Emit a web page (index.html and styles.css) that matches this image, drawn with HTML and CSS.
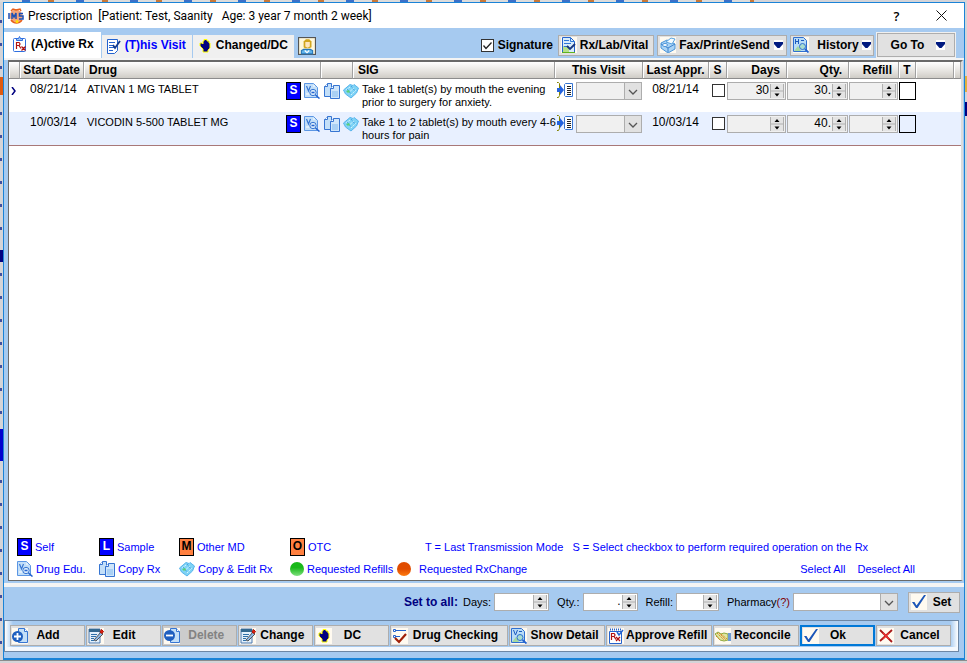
FILE: index.html
```
<!DOCTYPE html>
<html lang="en">
<head>
    <meta charset="UTF-8">
    <meta name="viewport" content="width=device-width, initial-scale=1.0">
    <title>Prescription</title>
    <link rel="stylesheet" href="styles.css">
</head>
<body>
    <!-- icons -->
    <svg class="sprite" aria-hidden="true">
        <symbol id="i-logo" viewBox="0 0 16 16">
            <circle cx="8" cy="8" r="6.500" fill="#f4a57a"/>
            <path d="M3 3l2-2 3 1 4-1 1 2" fill="none" stroke="#e8601c" stroke-width="1.500"/>
            <path d="M3 12c3 4 8 4 11 0" fill="none" stroke="#e8601c" stroke-width="1.500"/>
            <path d="M1 5v6M4 11V5l2 4 2-4v6M15 5.500h-3.500v2.500H15V11h-4" fill="none" stroke="#1c4fb5" stroke-width="1.500"/>
            <circle cx="9" cy="13.500" r="1.500" fill="#ffe000"/>
        </symbol>
        <symbol id="i-rx" viewBox="0 0 16 16">
            <rect x="1.500" y="2.500" width="12" height="13" rx="1" fill="#fff" stroke="#2f6fe0"/>
            <path d="M4.500 4.500v-2h2l1-2 1 2h2v2z" fill="#9cc4f5" stroke="#2f6fe0"/>
            <path d="M4.500 13V6.500h2.500q2 1.500 0 3H4.500M7 9.500l2 3M9.500 10.500l4 4M13.500 10.500l-4 4" fill="none" stroke="#b01010" stroke-width="1.200"/>
        </symbol>
        <symbol id="i-note" viewBox="0 0 16 16">
            <path d="M1.500 1.500h10v11l-3 3h-7z" fill="#fff" stroke="#2463cf"/>
            <path d="M3 4.500h6M3 7.500h4M3 9.500h5M3 12.500h4" stroke="#2463cf"/>
            <path d="M7 7l2 3 5-7" fill="none" stroke="#123a8c" stroke-width="1.800"/>
        </symbol>
        <symbol id="i-hand" viewBox="0 0 16 16">
            <path d="M6 14v-3L3 8V5h2l1 1V3h1V1.500h3V3h2v2h1v5l-2 2v2z" fill="#000080" stroke="#ffff00"/>
        </symbol>
        <symbol id="i-person" viewBox="0 0 16 16">
            <rect x=".5" y=".5" width="15" height="15" fill="#fff8dc" stroke="#555"/>
            <path d="M3 15v-3l2-1h6l2 1v3z" fill="#5fb3ea" stroke="#2876b8"/>
            <path d="M5 9V4l2-2h3l2 2v5l-2 1H6z" fill="#d2a61e"/>
            <path d="M6.500 4.500h4v4l-2 1-2-1z" fill="#ffe6bd"/>
            <path d="M6 12l2 2 2-2" fill="none" stroke="#fff"/>
        </symbol>
        <symbol id="i-lab" viewBox="0 0 16 16">
            <path d="M1.500.5h8l4 4v11h-12z" fill="#d8ecfa" stroke="#2463cf"/>
            <path d="M2 9h6v6H2z" fill="#b5e08a"/>
            <path d="M9.500.5v4h4M3 3.500h5M3 6.500h7M3 9.500h3" fill="none" stroke="#2f78d8"/>
            <path d="M1 15.500h13" stroke="#5fb31f"/>
            <path d="M6 9l3 3 5-5" fill="none" stroke="#16357e" stroke-width="1.800"/>
        </symbol>
        <symbol id="i-print" viewBox="0 0 16 16">
            <path d="M1 6l6-3 8 4v5l-7 4-7-5z" fill="#a9d3f5" stroke="#4a94d8"/>
            <path d="M6 5l5-4 4 1-3 5z" fill="#f3fbff" stroke="#5ba4e0"/>
            <path d="M1 7l7 4 7-4M8 11v4" fill="none" stroke="#3b82cd"/>
            <ellipse cx="5" cy="8" rx="2.500" ry="1.500" fill="#fff" stroke="#4a94d8"/>
        </symbol>
        <symbol id="i-history" viewBox="0 0 16 16">
            <path d="M.5.5h10l3 3v11H.5z" fill="#b9dcf7" stroke="#2f6fd0"/>
            <path d="M2.500 2v5M5.500 2v5M2.500 4.500h3M8 3.500h3" fill="none" stroke="#1c5bbf"/>
            <path d="M1 14l4-5 3 5z" fill="#a5d8a0"/>
            <circle cx="9.500" cy="9.500" r="3" fill="#a9ddcf" stroke="#2f6fd0"/>
            <path d="M12 12l3.500 3.500" stroke="#2463cf" stroke-width="1.800"/>
        </symbol>
        <symbol id="i-detail" viewBox="0 0 16 16">
            <path d="M.5.5h10l3 3v11H.5z" fill="#b9dcf7" stroke="#2f6fd0"/>
            <path d="M2.500 2l2 5 2-5M8 3.500h3" fill="none" stroke="#1c5bbf"/>
            <path d="M1 14l4-5 3 5z" fill="#a5d8a0"/>
            <circle cx="9" cy="9.500" r="3" fill="#a9ddcf" stroke="#2f6fd0"/>
            <path d="M11.500 12l4 3.500" stroke="#2463cf" stroke-width="1.800"/>
        </symbol>
        <symbol id="i-edu" viewBox="0 0 16 16">
            <path d="M.5.5h9l4 4v10H.5z" fill="#c3dff8" stroke="#5b96e4"/>
            <path d="M2.500 3l2 5 2-5" fill="none" stroke="#3675d2" stroke-width="1.200"/>
            <path d="M9 3h2M2 11h3" stroke="#fff"/>
            <circle cx="9" cy="9.500" r="3.200" fill="#d8ebfb" stroke="#3675d2"/>
            <path d="M7.500 9.500h3M11.500 12l4 3.500" stroke="#2463cf" stroke-width="1.500"/>
        </symbol>
        <symbol id="i-copy" viewBox="0 0 16 16">
            <path d="M.5 3.500l3-3h4v13h-7z" fill="#c3dff8" stroke="#3675d2"/>
            <path d="M6.500 5.500l3-3h6v13h-9z" fill="#d0e6fa" stroke="#3675d2"/>
            <path d="M3.500.5v3h-3M9.500 2.500v3h-3" fill="#fff" stroke="#3675d2"/>
            <path d="M8 8h6v6H8z" fill="#a9d0f4"/>
        </symbol>
        <symbol id="i-copyedit" viewBox="0 0 16 16">
            <path d="M.5 7L7 1.500l3 1 1-1L15.500 5l-2 5L8 15 2.500 11z" fill="#7fd3f5" stroke="#58b4ec"/>
            <path d="M3 7l4-3M5 10l6-5M8 12l5-5" stroke="#d7f6ff" stroke-dasharray="2 1"/>
            <path d="M4 6l4 5M8 3l4 5" stroke="#2f8fdc" stroke-dasharray="1 1"/>
            <path d="M3 8l3-1 1 2-2 1z" fill="#58d07a"/>
        </symbol>
        <symbol id="i-send" viewBox="0 0 16 16">
            <path d="M0 .5h1.500l1 1v12l-1 2H0" fill="none" stroke="#848400"/>
            <path d="M0 6h3V3l4 5-4 5v-3H0z" fill="#2463df"/>
            <path d="M8.500 1.500h7v13h-7l-1-1v-11z" fill="#fff" stroke="#3675d2"/>
            <path d="M10 4.500h4M10 6.500h4M10 8.500h4M10 10.500h4M10 12.500h4" stroke="#222"/>
        </symbol>
        <symbol id="i-add" viewBox="0 0 16 16">
            <path d="M6.500.5h6l3 3v11h-9z" fill="#c3dff8" stroke="#3675d2"/>
            <path d="M12.500.5v3h3" fill="#fff" stroke="#3675d2"/>
            <circle cx="5.500" cy="8.500" r="5.500" fill="#1f5fc0"/>
            <path d="M2 8.500h7M5.500 5v7" stroke="#fff" stroke-width="1.800"/>
        </symbol>
        <symbol id="i-delete" viewBox="0 0 16 16">
            <path d="M6.500.5h6l3 3v11h-9z" fill="#c3dff8" stroke="#3675d2"/>
            <path d="M12.500.5v3h3" fill="#fff" stroke="#3675d2"/>
            <circle cx="5.500" cy="7.500" r="5.500" fill="#1f5fc0"/>
            <path d="M2 7.500h7" stroke="#fff" stroke-width="1.800"/>
        </symbol>
        <symbol id="i-edit" viewBox="0 0 16 16">
            <path d="M1 1h11v14H1z" fill="#e3f0fb" stroke="#4a78b0"/>
            <path d="M1 1h11v3H1z" fill="#33688f"/>
            <path d="M3 6.500h6M3 8.500h5M3 10.500h3M3 12.500h3" stroke="#2f6fa8"/>
            <path d="M6 12l7-8 2 2-7 7z" fill="#8db9e8" stroke="#555"/>
            <path d="M12 4l1.500-2.500 2 2L14 5.500z" fill="#e02010" stroke="#b01000"/>
        </symbol>
        <symbol id="i-checklist" viewBox="0 0 16 16">
            <path d="M1.500 1.500h2v2h-2zM1.500 7.500h2v2h-2z" fill="#fff" stroke="#2463cf"/>
            <path d="M4 2.500h10M4 8.500h4" stroke="#2463cf"/>
            <path d="M3 10l4 4 7-8" fill="none" stroke="#a02008" stroke-width="2.200"/>
        </symbol>
        <symbol id="i-approve" viewBox="0 0 16 16">
            <path d="M1.500 3.500h12v12h-12z" fill="#fff" stroke="#2463cf"/>
            <path d="M2 1.500h12" stroke="#2463cf" stroke-width="2" stroke-dasharray="1 1"/>
            <path d="M3.500 12V5.500h2.500q2 1.500 0 3H3.500M6 8.500l2 3M8 9l4 4M12 9l-4 4" fill="none" stroke="#b01010" stroke-width="1.200"/>
            <path d="M9 4l2 3 4-5" fill="none" stroke="#2463cf" stroke-width="1.500"/>
        </symbol>
        <symbol id="i-shake" viewBox="0 0 16 16">
            <path d="M0 6l3-2 3 2 3-1 4 1v6l-4 1-4-1z" fill="#dfe6a0" stroke="#8fa83c"/>
            <path d="M2 5l7 7M4 5l7 7M1 8l4 4M6 6l6 5" stroke="#d98a28" stroke-dasharray="2 1"/>
            <path d="M13 5h3v8h-3z" fill="#6f9bd0"/>
        </symbol>
        <symbol id="i-check" viewBox="0 0 16 16">
            <path d="M1 8h2.500l2 3.500L13 1h2L6.500 14H5z" fill="#1c56b8"/>
        </symbol>
        <symbol id="i-cross" viewBox="0 0 16 16">
            <path d="M2 2l12 12M14 2L2 13" stroke="#a81818" stroke-width="1.800"/>
            <path d="M5 5l6 6M11 5l-6 6" stroke="#f03030" stroke-width="1.200"/>
        </symbol>
        <symbol id="i-down" viewBox="0 0 11 10">
            <rect x="1" width="9" height="10" fill="#fff"/>
            <path d="M1 2h9v2L6.500 8h-2L1 4z" fill="#001a80"/>
        </symbol>
        <symbol id="i-spin" viewBox="0 0 14 14">
            <path d="M0 0h14v14H0z" fill="#e4e4e4"/>
            <path d="M.5 0v14M13.500 0v14M0 7h14" stroke="#b0b0b0"/>
            <path d="M4.500 5L7 2l2.500 3zM4.500 9.500h5L7 12.500z" fill="#000"/>
        </symbol>
    </svg>

    <div class="window">
        <header class="titlebar">
            <svg class="icon"><use href="#i-logo"/></svg>
            <h1>Prescription&nbsp; [Patient: Test, Saanity&nbsp;&nbsp; Age: 3 year 7 month 2 week]</h1>
            <button class="help" aria-label="Help">?</button>
            <button class="close" aria-label="Close"><svg viewBox="0 0 11 11"><path d="M.5.5l10 10M10.500.5l-10 10" stroke="#111"/></svg></button>
        </header>

        <div class="toolbar">
            <nav class="tabs">
                <button class="tab active"><svg class="icon"><use href="#i-rx"/></svg>(A)ctive Rx</button>
                <button class="tab visit"><svg class="icon"><use href="#i-note"/></svg>(T)his Visit</button>
                <button class="tab changed"><svg class="icon"><use href="#i-hand"/></svg>Changed/DC</button>
                <button class="photo" aria-label="Patient photo"><svg class="icon"><use href="#i-person"/></svg></button>
            </nav>
            <div class="tools">
                <label class="signature"><input type="checkbox" class="check" checked>Signature</label>
                <button class="btn lab"><svg class="icon"><use href="#i-lab"/></svg><span>Rx/Lab/Vital</span></button>
                <button class="btn fax"><svg class="icon"><use href="#i-print"/></svg><span>Fax/Print/eSend</span><svg class="arrow"><use href="#i-down"/></svg></button>
                <button class="btn history"><svg class="icon"><use href="#i-history"/></svg><span>History</span><svg class="arrow"><use href="#i-down"/></svg></button>
                <button class="btn goto"><span>Go To</span><svg class="arrow"><use href="#i-down"/></svg></button>
            </div>
        </div>

        <main class="sheet">
            <table class="rx">
                <colgroup>
                    <col class="c-mark"><col class="c-date"><col class="c-drug"><col class="c-act"><col class="c-sig"><col class="c-visit"><col class="c-last"><col class="c-s"><col class="c-days"><col class="c-qty"><col class="c-refill"><col class="c-t"><col class="c-x"><col>
                </colgroup>
                <thead>
                    <tr>
                        <th></th><th>Start Date</th><th class="left">Drug</th><th></th><th class="left">SIG</th><th>This Visit</th><th>Last Appr.</th><th>S</th><th class="right">Days</th><th class="right">Qty.</th><th class="right">Refill</th><th>T</th><th></th><th></th>
                    </tr>
                </thead>
                <tbody>
                    <tr>
                        <td class="mark"><svg viewBox="0 0 5 8"><path d="M1 0l3 4-3 4" fill="none" stroke="#000080" stroke-width="1.500"/></svg></td>
                        <td class="date">08/21/14</td>
                        <td><div class="drug"><span>ATIVAN 1 MG TABLET</span><b class="badge">S</b><svg class="icon"><use href="#i-edu"/></svg></div></td>
                        <td><div class="acts"><svg class="icon"><use href="#i-copy"/></svg><svg class="icon"><use href="#i-copyedit"/></svg></div></td>
                        <td class="sig">Take 1 tablet(s) by mouth the evening<br>prior to surgery for anxiety.</td>
                        <td><div class="visit-cell"><svg class="icon"><use href="#i-send"/></svg><select class="drop" aria-label="This visit"><option></option></select></div></td>
                        <td class="last">08/21/14</td>
                        <td class="mid"><input type="checkbox" class="check" aria-label="Select"></td>
                        <td><div class="spin"><input type="text" value="30" aria-label="Days"><svg><use href="#i-spin"/></svg></div></td>
                        <td><div class="spin"><input type="text" value="30." aria-label="Quantity"><svg><use href="#i-spin"/></svg></div></td>
                        <td><div class="spin"><input type="text" aria-label="Refill"><svg><use href="#i-spin"/></svg></div></td>
                        <td><input type="checkbox" class="check big" aria-label="Transmission"></td>
                        <td></td><td></td>
                    </tr>
                    <tr>
                        <td></td>
                        <td class="date">10/03/14</td>
                        <td><div class="drug"><span>VICODIN 5-500 TABLET MG</span><b class="badge">S</b><svg class="icon"><use href="#i-edu"/></svg></div></td>
                        <td><div class="acts"><svg class="icon"><use href="#i-copy"/></svg><svg class="icon"><use href="#i-copyedit"/></svg></div></td>
                        <td class="sig">Take 1 to 2 tablet(s) by mouth every 4-6<br>hours for pain</td>
                        <td><div class="visit-cell"><svg class="icon"><use href="#i-send"/></svg><select class="drop" aria-label="This visit"><option></option></select></div></td>
                        <td class="last">10/03/14</td>
                        <td class="mid"><input type="checkbox" class="check" aria-label="Select"></td>
                        <td><div class="spin"><input type="text" aria-label="Days"><svg><use href="#i-spin"/></svg></div></td>
                        <td><div class="spin"><input type="text" value="40." aria-label="Quantity"><svg><use href="#i-spin"/></svg></div></td>
                        <td><div class="spin"><input type="text" aria-label="Refill"><svg><use href="#i-spin"/></svg></div></td>
                        <td><input type="checkbox" class="check big" aria-label="Transmission"></td>
                        <td></td><td></td>
                    </tr>
                </tbody>
            </table>

            <div class="legend">
                <span><b class="badge">S</b>Self</span>
                <span><b class="badge">L</b>Sample</span>
                <span><b class="badge orange">M</b>Other MD</span>
                <span><b class="badge orange">O</b>OTC</span>
                <span class="hint">T = Last Transmission Mode&nbsp;&nbsp; S = Select checkbox to perform required operation on the Rx</span>
                <span><svg class="icon"><use href="#i-edu"/></svg>Drug Edu.</span>
                <span><svg class="icon"><use href="#i-copy"/></svg>Copy Rx</span>
                <span><svg class="icon"><use href="#i-copyedit"/></svg>Copy &amp; Edit Rx</span>
                <span><i class="dot green"></i>Requested Refills</span>
                <span><i class="dot red"></i>Requested RxChange</span>
                <span class="links"><a href="#">Select All</a><a href="#">Deselect All</a></span>
            </div>
        </main>

        <form class="setall">
            <strong>Set to all:</strong>
            <label for="days">Days:</label>
            <div class="spin white days"><input type="text" id="days"><svg><use href="#i-spin"/></svg></div>
            <label for="qty">Qty.:</label>
            <div class="spin white qty"><input type="text" id="qty" value="."><svg><use href="#i-spin"/></svg></div>
            <label for="refill">Refill:</label>
            <div class="spin white refill"><input type="text" id="refill"><svg><use href="#i-spin"/></svg></div>
            <label for="pharmacy">Pharmacy<em>(?)</em></label>
            <select class="drop white" id="pharmacy"><option></option></select>
            <button type="button" class="btn set"><svg class="icon"><use href="#i-check"/></svg><span>Set</span></button>
        </form>

        <footer class="actions">
            <button class="btn short"><svg class="icon"><use href="#i-add"/></svg><span>Add</span></button>
            <button class="btn short"><svg class="icon"><use href="#i-edit"/></svg><span>Edit</span></button>
            <button class="btn" disabled><svg class="icon"><use href="#i-delete"/></svg><span>Delete</span></button>
            <button class="btn"><svg class="icon"><use href="#i-edit"/></svg><span>Change</span></button>
            <button class="btn short"><svg class="icon"><use href="#i-hand"/></svg><span>DC</span></button>
            <button class="btn checking"><svg class="icon"><use href="#i-checklist"/></svg><span>Drug Checking</span></button>
            <button class="btn detail"><svg class="icon"><use href="#i-detail"/></svg><span>Show Detail</span></button>
            <button class="btn approve"><svg class="icon"><use href="#i-approve"/></svg><span>Approve Refill</span></button>
            <button class="btn reconcile"><svg class="icon"><use href="#i-shake"/></svg><span>Reconcile</span></button>
            <button class="btn short ok"><svg class="icon"><use href="#i-check"/></svg><span>Ok</span></button>
            <button class="btn"><svg class="icon"><use href="#i-cross"/></svg><span>Cancel</span></button>
        </footer>
    </div>
</body>
</html>
```
FILE: styles.css
```
*{
    box-sizing: border-box;
}
body{
    margin: 0;
    height: 100vh;
    display: flex;
    padding: 2px 2px 3px 3px;
    /* slivers of the application behind the window */
    background:
        linear-gradient(#e05a10, #e05a10) 0 77px / 3px 18px no-repeat,
        linear-gradient(#000080, #000080) 0 250px / 3px 12px no-repeat,
        linear-gradient(#0000d0, #0000d0) 0 429px / 3px 32px no-repeat,
        linear-gradient(#e0b040, #e0b040) right 76px / 2px 16px no-repeat,
        linear-gradient(#000080, #000080) right 102px / 2px 14px no-repeat,
        repeating-linear-gradient(transparent 0 20px, #4050a0 20px 23px) 0 0 / 2px 100% no-repeat,
        repeating-linear-gradient(to right, #dcdcdc 0 22px, #3c70c8 22px 30px, #dcdcdc 30px 48px, #c87838 48px 54px) 0 0 / 78% 2px no-repeat,
        linear-gradient(#8c8c8c, #8c8c8c) 0 660px / 100% 1px no-repeat,
        #d4d4d8;
    font-family: "Liberation Sans", Arial, sans-serif;
    font-size: 11px;
    line-height: 13px;
    color: #000;
}
button, input, select{
    font: inherit;
    color: inherit;
    margin: 0;
    padding: 0;
    border-radius: 0;
}
.sprite{
    display: none;
}
.icon{
    width: 16px;
    height: 16px;
    flex: none;
}

/* window */
.window{
    flex: 1;
    min-width: 0;
    display: flex;
    flex-direction: column;
    border: 1px solid #1a83d7;
    border-bottom-width: 2px;
    background: #a6caf0;
}
.titlebar{
    display: flex;
    align-items: center;
    height: 25px;
    padding-left: 4px;
    background: #fff;
}
.titlebar h1{
    flex: 1;
    margin: 0 0 0 4px;
    font: 12px/16px Roboto, "Open Sans", sans-serif;
}
.titlebar button{
    width: 45px;
    height: 25px;
    border: 0;
    background: none;
    font: 600 13px/16px "Open Sans", sans-serif;
}
.titlebar .close svg{
    width: 11px;
    height: 11px;
}

/* tabs and tools */
.toolbar{
    display: flex;
    justify-content: space-between;
    align-items: flex-end;
    padding: 4px 9px 0 0;
    border-bottom: 2px solid #f4f4f4;
}
.tabs{
    display: flex;
    align-items: flex-end;
    gap: 1px;
}
.tab{
    display: flex;
    align-items: center;
    gap: 3px;
    height: 23px;
    padding: 0 6px 2px 4px;
    border: 0;
    background: #f0f0f0;
    font-weight: bold;
    font-size: 12px;
}
.tab.active{
    height: 26px;
    padding: 0 7px 2px 8px;
    background: #fff;
}
.tab.visit{
    color: #0000ff;
}
.photo{
    width: 18px;
    height: 18px;
    margin: 0 0 3px 3px;
    border: 0;
    background: none;
}
.photo .icon{
    display: block;
    width: 18px;
    height: 18px;
}
.tools{
    display: flex;
    align-items: center;
    gap: 3px;
    height: 26px;
    font-size: 12px;
    font-weight: bold;
}
.signature{
    display: flex;
    align-items: center;
    gap: 4px;
    margin-right: 2px;
}
.btn{
    display: flex;
    align-items: center;
    height: 21px;
    padding: 0 2px;
    border: 1px solid #adadad;
    background: #e1e1e1;
    font-size: 12px;
    font-weight: bold;
    white-space: nowrap;
}
.btn span{
    flex: 1;
    text-align: center;
}
.btn .icon{
    background: #fffaf0;
}
.arrow{
    width: 11px;
    height: 10px;
    flex: none;
}
.lab{
    width: 96px;
}
.fax{
    width: 130px;
}
.history{
    width: 84px;
    padding-right: 1px;
}
.history span{
    padding-left: 6px;
}
.goto{
    width: 78px;
    height: 24px;
    padding-right: 8px;
    outline: 1px solid #f0f0f0;
}

/* form controls */
.check{
    appearance: none;
    display: block;
    width: 13px;
    height: 13px;
    border: 1px solid #333;
    background: #fff;
}
.check:checked{
    background: #fff url("data:image/svg+xml,%3Csvg xmlns='http://www.w3.org/2000/svg' viewBox='0 0 11 11'%3E%3Cpath d='M1.500 5.500l2.500 3 5.500-6' fill='none' stroke='%23222' stroke-width='1.300'/%3E%3C/svg%3E");
}
.check.big{
    width: 17px;
    height: 18px;
    border-color: #000;
    background: transparent;
}
.drop{
    appearance: none;
    flex: 1;
    min-width: 0;
    height: 18px;
    border: 1px solid #adadad;
    background: #f0f0f0 url("data:image/svg+xml,%3Csvg xmlns='http://www.w3.org/2000/svg' viewBox='0 0 17 16'%3E%3Cpath d='M0 0h17v16H0z' fill='%23e1e1e1'/%3E%3Cpath d='M.5 0v16' stroke='%23adadad'/%3E%3Cpath d='M5 7l4 4 4-4' fill='none' stroke='%23555' stroke-width='1.300'/%3E%3C/svg%3E") right center / 17px 16px no-repeat;
}
.spin{
    display: flex;
    height: 18px;
    border: 1px solid #adadad;
    background: #f0f0f0;
}
.spin input{
    flex: 1;
    min-width: 0;
    width: 20px;
    height: 14px;
    border: 0;
    background: none;
    text-align: right;
    font-size: 12px;
}
.spin svg{
    width: 14px;
    height: 14px;
    margin: 1px;
    flex: none;
}
.spin.white, .drop.white{
    background-color: #fff;
}

/* prescription list */
.sheet{
    flex: 1;
    display: flex;
    flex-direction: column;
    margin: 0 1px 2px 4px;
    border-top: 2px solid #696969;
    border-left: 1px solid #696969;
    border-right: 2px solid #dcdcdc;
    border-bottom: 1px solid #696969;
    background: #fff;
}
.rx{
    width: 100%;
    table-layout: fixed;
    border-spacing: 0;
}
.c-mark{ width: 11px; }
.c-date{ width: 64px; }
.c-drug{ width: 237px; }
.c-act{ width: 32px; }
.c-sig{ width: 202px; }
.c-visit{ width: 88px; }
.c-last{ width: 66px; }
.c-s{ width: 18px; }
.c-days{ width: 60px; }
.c-qty{ width: 62px; }
.c-refill{ width: 50px; }
.c-t{ width: 17px; }
.c-x{ width: 38px; }
.rx th{
    height: 17px;
    padding: 0;
    border-right: 1px solid #a0a0a0;
    border-bottom: 1px solid #8c8c8c;
    box-shadow: inset 1px 0 #fff;
    background: linear-gradient(#fff, #e4e2de 60%, #cfccc6);
    font-size: 12px;
    line-height: 15px;
    white-space: nowrap;
}
.rx th.left{
    padding-left: 5px;
    text-align: left;
}
.rx th.right{
    padding-right: 6px;
    text-align: right;
}
.rx td{
    height: 33px;
    padding: 3px 1px 0 0;
    vertical-align: top;
}
.rx tbody tr:nth-child(2) td{
    height: 34px;
    background: #e8f0ff;
    border-bottom: 1px solid #a87878;
}
.rx td.mark{
    padding: 8px 0 0 2px;
}
.mark svg{
    display: block;
    width: 5px;
    height: 8px;
}
.rx td.date{
    padding: 4px 0 0 10px;
    font-size: 12px;
}
.drug{
    display: flex;
    gap: 3px;
    padding-left: 3px;
}
.drug span{
    flex: 1;
    padding-top: 1px;
    white-space: nowrap;
}
.acts{
    display: flex;
    gap: 3px;
    padding: 1px 0 0 3px;
}
.acts .icon:last-child{
    margin-right: -8px;
}
.drug .icon{
    margin-top: 1px;
}
.rx td.sig{
    padding: 4px 0 0 9px;
    white-space: nowrap;
}
.visit-cell{
    display: flex;
    gap: 3px;
    padding-left: 2px;
}
.rx td.last{
    padding-top: 4px;
    font-size: 12px;
    text-align: center;
}
.rx td.mid{
    padding: 5px 0 0 3px;
}
.badge{
    display: inline-block;
    width: 15px;
    height: 18px;
    border: 1px solid #000;
    background: #0000ff;
    color: #fff;
    font-size: 12px;
    line-height: 15px;
    text-align: center;
}
.badge.orange{
    background: #ff8040;
    color: #000;
}

/* legend */
.legend{
    display: grid;
    grid-template-columns: 82px 80px 111px 107px 1fr auto;
    row-gap: 4px;
    margin-top: auto;
    padding: 0 46px 2px 8px;
    color: #0000ff;
}
.legend > span{
    display: flex;
    align-items: center;
    gap: 3px;
    height: 18px;
    white-space: nowrap;
}
.legend .hint{
    grid-column: span 2;
    padding-left: 28px;
}
.legend a{
    color: inherit;
    text-decoration: none;
}
.links a + a{
    margin-left: 9px;
}
.dot{
    width: 14px;
    height: 14px;
    border-radius: 50%;
}
.dot.green{
    background: linear-gradient(#18b818 40%, #80e080);
}
.dot.red{
    margin-right: 5px;
    background: linear-gradient(#e04c00 50%, #ff7c10);
}

/* set to all */
.setall{
    display: flex;
    align-items: center;
    justify-content: flex-end;
    height: 37px;
    padding: 0 4px 3px 0;
    border-top: 4px solid #f4f4f4;
}
.setall strong{
    margin-right: 5px;
    color: #000080;
    font-size: 12px;
}
.setall label{
    margin-right: 3px;
}
.setall em{
    color: #800000;
    font-style: normal;
}
.setall .spin{
    margin-right: 8px;
}
.setall .days, .setall .qty{
    width: 55px;
}
.setall .refill{
    width: 43px;
}
.setall .drop{
    flex: none;
    width: 105px;
    margin-right: 10px;
}
.set{
    width: 52px;
}

/* bottom buttons */
.actions{
    display: flex;
    gap: 1px;
    margin: 0 5px 6px 0;
    padding: 4px 7px 5px 5px;
    border: 1px solid #6d87a5;
    background:
        linear-gradient(#f4f8fd, #f4f8fd) 0 100% / 100% 4px no-repeat,
        linear-gradient(to right, #fff, #a6caf0 8px, #a6caf0 calc(100% - 8px), #fff);
}
.actions .btn{
    flex: 1 1 75px;
    padding: 0 4px 0 1px;
}
.actions .btn.short{
    padding-right: 16px;
}
.actions .btn:disabled{
    background: #ccc;
    color: #838383;
}
.actions .checking{
    flex-basis: 117px;
}
.actions .detail{
    flex-basis: 96px;
    padding-right: 1px;
}
.actions .approve{
    flex-basis: 106px;
    padding-right: 1px;
}
.actions .reconcile{
    flex-basis: 86px;
}
.actions .ok{
    border: 2px solid #0078d7;
}
```
